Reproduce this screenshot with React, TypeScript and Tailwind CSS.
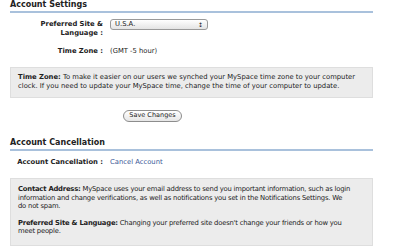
export default function App() {
  return (
    <div className="w-[400px] h-[250px] overflow-hidden bg-white text-[#222] font-['DejaVu_Sans',_Verdana,_sans-serif] text-[6.8px] leading-[8.5px]">
      <div className="ml-[10px] w-[363px]">
        {/* account settings */}
        <h2 className="text-[8px] leading-[10px] font-bold pb-[1px] border-b-2 border-[#a9c1dc]">
          Account Settings
        </h2>

        <div className="grid grid-cols-[93px_1fr] gap-x-[7px] mt-[6px]">
          <div className="text-right font-bold leading-[9px] pt-[1px]">
            Preferred Site &amp;
            <br />
            Language :
          </div>
          <div>
            <div className="w-[98px] h-[11px] rounded-[3px] border border-[#9a9a9a] bg-gradient-to-b from-white to-[#e4e4e4] flex items-center justify-between px-[4px]">
              <span>U.S.A.</span>
              <span className="text-[6px] leading-none">&#8597;</span>
            </div>
          </div>
          <div className="text-right font-bold mt-[9px]">Time Zone :</div>
          <div className="mt-[9px]">(GMT -5 hour)</div>
        </div>

        <div className="mt-[11px] bg-[#ececec] border border-[#dedede] px-[7px] pt-[5px] pb-[6px] leading-[9px]">
          <b>Time Zone:</b> To make it easier on our users we synched your MySpace time zone to your computer
          <br />
          clock. If you need to update your MySpace time, change the time of your computer to update.
        </div>

        <div className="flex justify-center pr-[78px] mt-[12px]">
          <button className="h-[12px] px-[5px] rounded-full border border-[#8d8d8d] bg-gradient-to-b from-white to-[#e6e6e6] text-[6.5px] leading-none">
            Save Changes
          </button>
        </div>

        {/* account cancellation */}
        <h2 className="mt-[16px] text-[8px] leading-[10px] font-bold pb-[1px] border-b-2 border-[#a9c1dc]">
          Account Cancellation
        </h2>

        <div className="grid grid-cols-[93px_1fr] gap-x-[7px] mt-[7px]">
          <div className="text-right font-bold">Account Cancellation :</div>
          <a className="text-[#3b5998]">Cancel Account</a>
        </div>

        <div className="mt-[12px] bg-[#ececec] border border-[#dedede] pl-[7px] pr-[3px] pt-[6px] pb-[9px] tracking-[-0.2px]">
          <p>
            <b>Contact Address:</b> MySpace uses your email address to send you important information, such as login
            <br />
            information and change verifications, as well as notifications you set in the Notifications Settings. We
            <br />
            do not spam.
          </p>
          <p className="mt-[8px]">
            <b>Preferred Site &amp; Language:</b> Changing your preferred site doesn't change your friends or how you
            <br />
            meet people.
          </p>
        </div>
      </div>
    </div>
  );
}
